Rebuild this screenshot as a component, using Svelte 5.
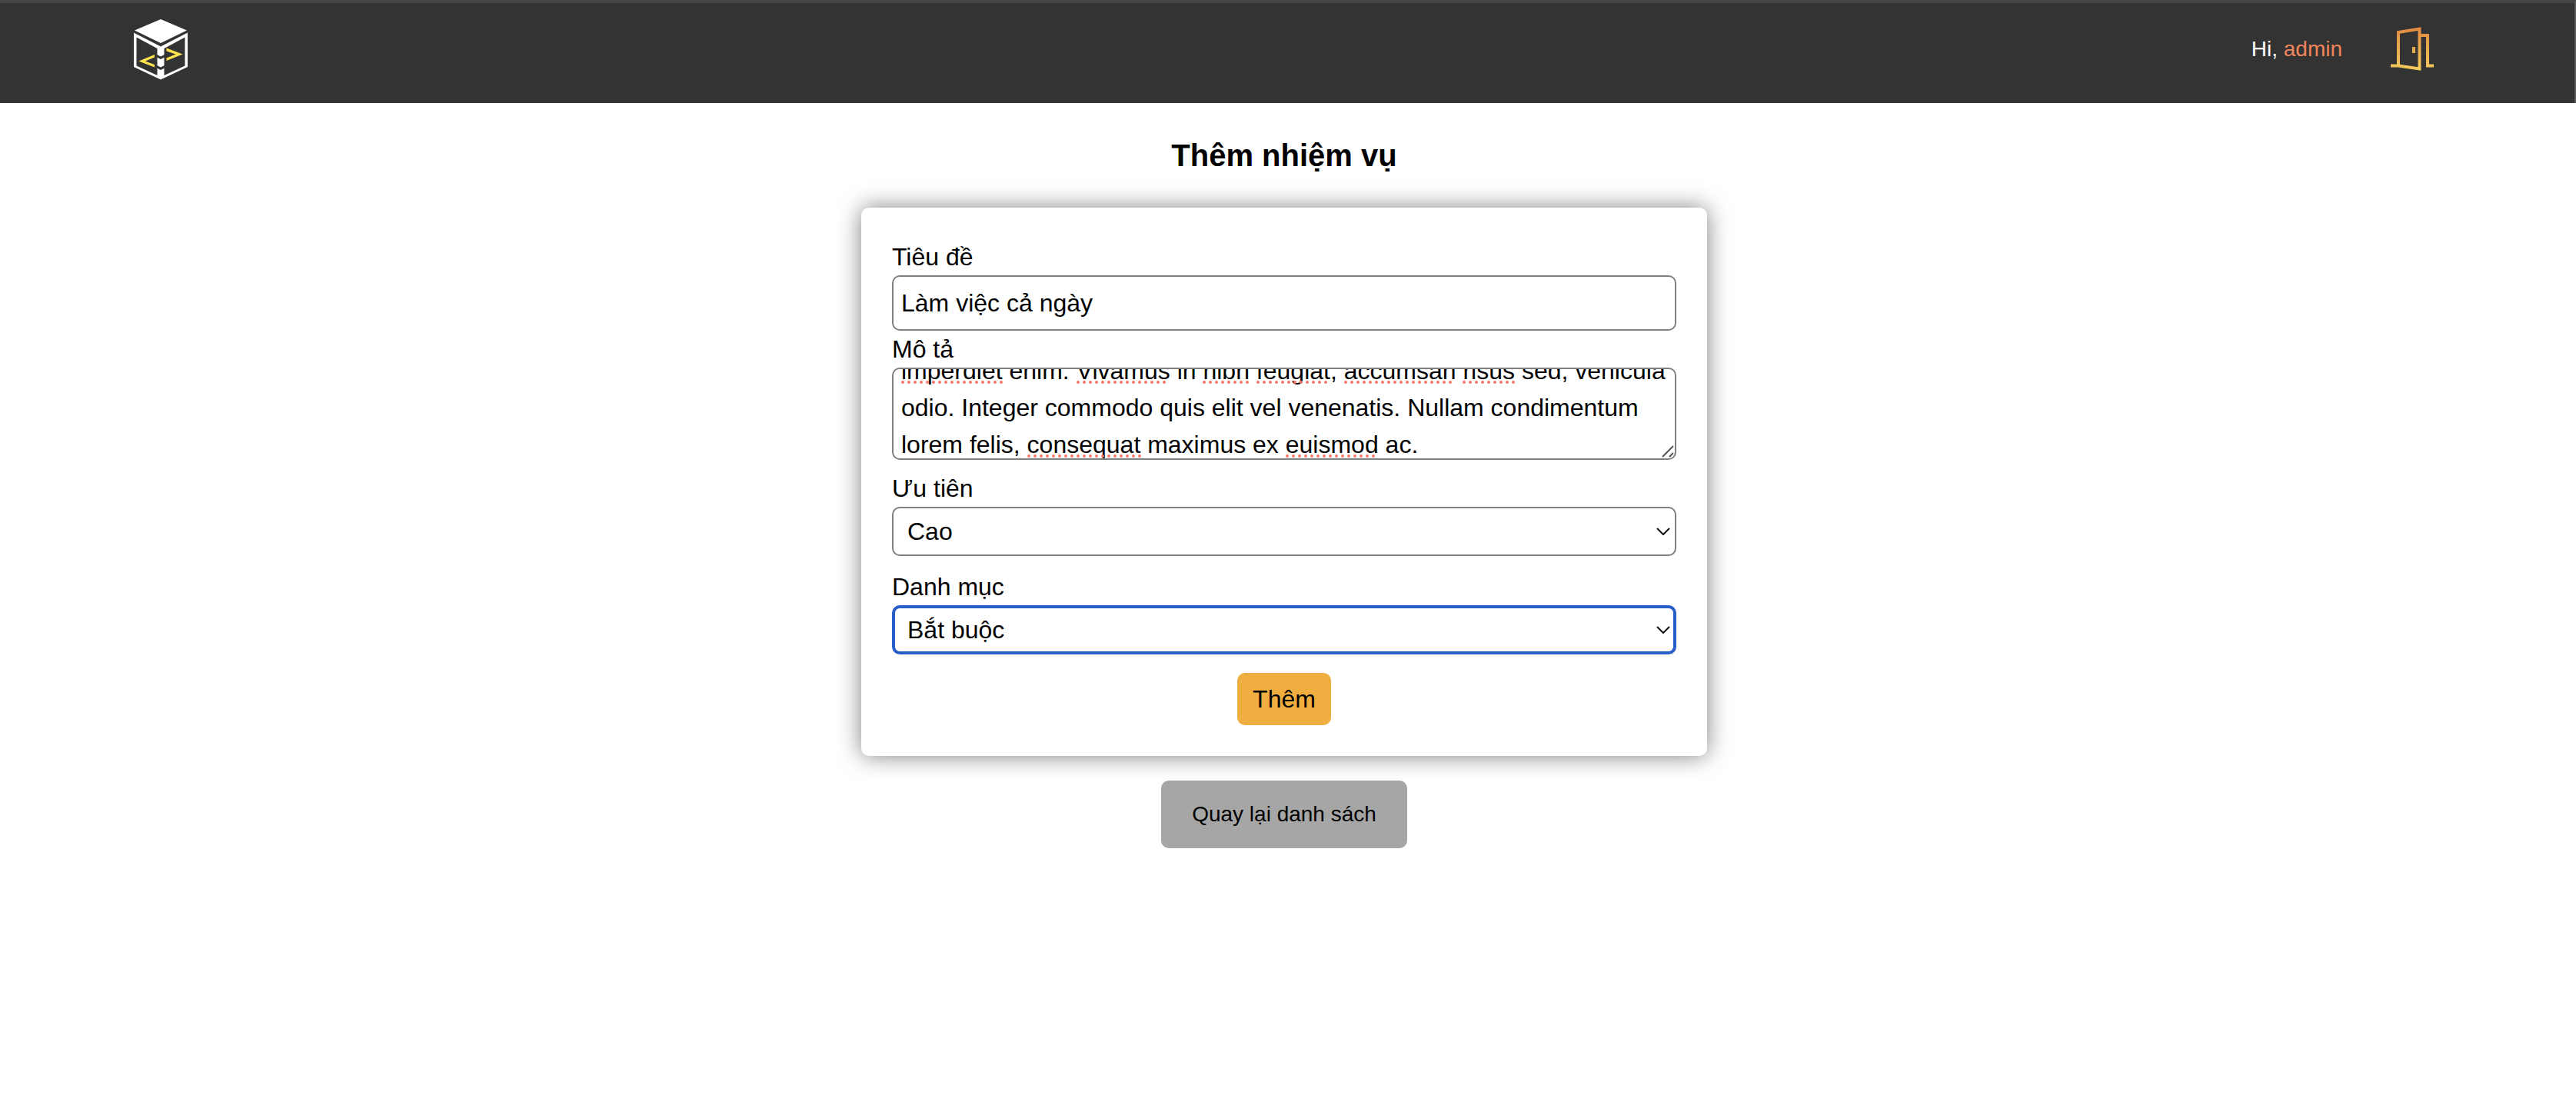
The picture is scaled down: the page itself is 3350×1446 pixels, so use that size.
<script>
  import { onMount } from 'svelte';

  let title = $state('Làm việc cả ngày');
  let description = $state(
    'imperdiet enim. Vivamus in nibh feugiat, accumsan risus sed, vehicula odio. Integer commodo quis elit vel venenatis. Nullam condimentum lorem felis, consequat maximus ex euismod ac.'
  );
  let priority = $state('Cao');
  let category = $state('Bắt buộc');
  let area;

  // Spelling marks: start, end and height inside the description box.
  const marks = [
    [12, 143, 19],
    [240, 361, 19],
    [404, 464, 19],
    [474, 569, 19],
    [588, 733, 19],
    [742, 811, 19],
    [176, 323, 115],
    [512, 632, 115]
  ];

  onMount(() => {
    area.scrollTop = 32;
  });
</script>

<header>
  <a class="logo" href="#home" aria-label="Trang chủ">
    <svg viewBox="0 0 70 79" width="70" height="79">
      <path fill="#fff" d="M35 0 69 14.500 35 31 1 14.500Z" />
      <path
        fill="#fff"
        fill-rule="evenodd"
        d="M0 17.500 35 35.500 70 17.500V62L35 78.500 0 62ZM3.500 23.500V60.500L30.500 73V38ZM66.500 23.500V60.500L39.500 73V38Z"
      />
      <path fill="#333" d="M30 46 35 48.500 40 46V49.500L35 52 30 49.500ZM30 60 35 62.500 40 60V63.500L35 66 30 63.500Z" />
      <path
        fill="#ffe44d"
        d="M27 46V49.500L15 54.500 27 59V62.500L6.500 54.500ZM42.500 37.500V41.500L54.500 45.500 42.500 50.500V54L63.500 45.500Z"
      />
    </svg>
  </a>
  <div class="user">
    <span>Hi, <a class="name" href="#profile">admin</a></span>
    <button class="logout" type="button" aria-label="Đăng xuất">
      <svg viewBox="0 0 58 58" width="58" height="58">
        <defs>
          <linearGradient id="door" gradientUnits="userSpaceOnUse" x1="0" y1="0" x2="0" y2="58">
            <stop offset="0" stop-color="#e08a42" />
            <stop offset="1" stop-color="#f3cc5c" />
          </linearGradient>
        </defs>
        <g fill="none" stroke="url(#door)" stroke-width="4">
          <path d="M11 50.500V7L38.500 2.500V54.500L11 50.500M1 50.500H12M39 11H49V50.500H57" />
          <path d="M31 26V34" />
        </g>
      </svg>
    </button>
  </div>
</header>

<main>
  <h1>Thêm nhiệm vụ</h1>
  <form>
    <label for="title">Tiêu đề</label>
    <input id="title" type="text" bind:value={title} />

    <label for="description">Mô tả</label>
    <div class="box description">
      <textarea id="description" bind:this={area} bind:value={description} spellcheck="false"></textarea>
      <svg class="marks" viewBox="0 0 1020 120" width="1020" height="120" aria-hidden="true">
        {#each marks as [from, to, y]}
          <path class="dots" d="M{from + 2} {y}H{to}" />
        {/each}
        <path class="grip" d="M1002 116 1016 102M1011 116 1016 111" />
      </svg>
    </div>

    <label for="priority">Ưu tiên</label>
    <div class="box">
      <select id="priority" bind:value={priority}>
        <option>Cao</option>
        <option>Thấp</option>
      </select>
      <svg class="chevron" viewBox="0 0 18 10" width="18" height="10" aria-hidden="true"><path d="M1 1 9 9 17 1" /></svg>
    </div>

    <label for="category">Danh mục</label>
    <div class="box">
      <select id="category" class="active" bind:value={category}>
        <option>Bắt buộc</option>
        <option>Tùy chọn</option>
      </select>
      <svg class="chevron" viewBox="0 0 18 10" width="18" height="10" aria-hidden="true"><path d="M1 1 9 9 17 1" /></svg>
    </div>

    <button class="submit" type="button">Thêm</button>
  </form>
  <a class="back" href="#list">Quay lại danh sách</a>
</main>

<style>
  :global(body) {
    margin: 0;
    background: #fff;
    color: #000;
    font-family: 'Liberation Sans', Arial, sans-serif;
    font-size: 32px;
    line-height: 48px;
  }
  header {
    display: flex;
    align-items: center;
    justify-content: space-between;
    box-sizing: border-box;
    height: 134px;
    padding: 0 182px 10px 174px;
    background: #333;
    border-top: 4px solid #444;
    border-right: 2px solid #5a5a5a;
  }
  .logo svg,
  .logout svg {
    display: block;
  }
  .user {
    display: flex;
    align-items: center;
    gap: 62px;
    color: #fff;
    font-size: 28px;
  }
  .name {
    color: #f0845c;
    text-decoration: none;
  }
  .logout {
    padding: 0;
    border: 0;
    background: none;
  }
  main {
    display: flex;
    flex-direction: column;
    align-items: center;
    padding: 38px 10px 40px 0;
  }
  h1 {
    margin: 0 0 38px;
    font-size: 40px;
    line-height: 60px;
  }
  form {
    display: flex;
    flex-direction: column;
    box-sizing: border-box;
    width: 100%;
    max-width: 1100px;
    padding: 40px;
    border-radius: 10px;
    background: #fff;
    box-shadow: 0 0 30px rgba(0, 0, 0, 0.5);
  }
  input,
  textarea,
  select {
    display: block;
    box-sizing: border-box;
    width: 100%;
    margin: 0;
    border: 2px solid #808080;
    border-radius: 10px;
    outline: none;
    background: #fff;
    color: #000;
    font: inherit;
  }
  input {
    height: 72px;
    padding: 10px;
  }
  textarea {
    height: 120px;
    padding: 10px;
    overflow: hidden;
    resize: none;
  }
  .box {
    position: relative;
    margin-bottom: 16px;
  }
  .description {
    margin-bottom: 13px;
  }
  .marks {
    position: absolute;
    top: 0;
    left: 0;
    pointer-events: none;
  }
  .dots {
    fill: none;
    stroke: #f8786e;
    stroke-width: 4;
    stroke-linecap: round;
    stroke-dasharray: 0 8;
  }
  .grip {
    fill: none;
    stroke: #555;
    stroke-width: 2;
  }
  select {
    appearance: none;
    height: 64px;
    padding: 0 48px 0 18px;
  }
  select.active {
    padding: 0 46px 0 16px;
    border: 4px solid #285ec8;
  }
  .chevron {
    position: absolute;
    top: 27px;
    right: 8px;
    fill: none;
    stroke: #111;
    stroke-width: 2;
    pointer-events: none;
  }
  .submit {
    align-self: center;
    margin-top: 8px;
    padding: 10px 20px;
    border: 0;
    border-radius: 10px;
    background: #f0ae40;
    color: #000;
    font: inherit;
  }
  .back {
    margin-top: 32px;
    padding: 20px 40px;
    border-radius: 10px;
    background: #a6a6a6;
    color: #000;
    font-size: 28px;
    text-decoration: none;
  }
</style>
